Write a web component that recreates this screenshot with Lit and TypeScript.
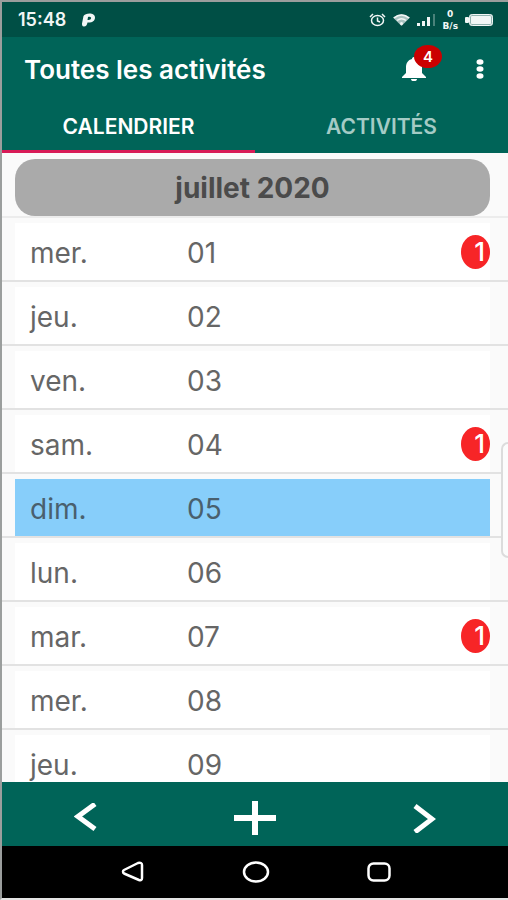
import { LitElement, html, css, svg } from "lit";
import { customElement, state } from "lit/decorators.js";
import { classMap } from "lit/directives/class-map.js";

interface Day {
  name: string;
  num: string;
  count?: number;
  today?: boolean;
}

const DAYS: Day[] = [
  { name: "mer.", num: "01", count: 1 },
  { name: "jeu.", num: "02" },
  { name: "ven.", num: "03" },
  { name: "sam.", num: "04", count: 1 },
  { name: "dim.", num: "05", today: true },
  { name: "lun.", num: "06" },
  { name: "mar.", num: "07", count: 1 },
  { name: "mer.", num: "08" },
  { name: "jeu.", num: "09" },
];

const icon = (w: number, h: number, body: unknown) =>
  html`<svg width=${w} height=${h} viewBox="0 0 ${w} ${h}" aria-hidden="true">${body}</svg>`;

@customElement("status-bar")
class StatusBar extends LitElement {
  static styles = css`
    :host {
      display: flex;
      align-items: center;
      height: 35px;
      padding: 0 14px 0 16px;
      background: #004f45;
      color: #f2f7f6;
    }
    svg {
      display: block;
    }
    .time {
      font-size: 18px;
      font-weight: 600;
      margin-right: 16px;
    }
    .right {
      display: flex;
      align-items: center;
      gap: 7px;
      margin-left: auto;
    }
    .rate {
      font-family: "DejaVu Sans", sans-serif;
      font-size: 9px;
      line-height: 12px;
      font-weight: 700;
      text-align: center;
    }
    .rate span {
      display: block;
    }
  `;

  render() {
    return html`
      <span class="time">15:48</span>
      ${icon(13, 14, svg`<path fill="currentColor" fill-rule="evenodd" d="M1.500 3C3 0 13-1 13 4.500c0 4-4 5.500-7.500 5C5 12 4 13.500 2 13.500S0 12 0 10.500L1.500 3ZM6 4 5.500 7C8 7.500 9.500 6 9 4.500 8.500 3.500 7 3.500 6 4Z"/>`)}
      <div class="right">
        ${icon(17, 14, svg`<g fill="none" stroke="currentColor" stroke-width="1.500"><ellipse cx="8.500" cy="7.500" rx="6" ry="5"/><path d="M8.500 4.500V8L11 9M1 4 4 1M16 4l-3-3"/></g>`)}
        ${icon(17, 12, svg`<path fill="currentColor" opacity=".7" d="M0 3.500Q8.500-3 17 3.500L8.500 12Z"/><path fill="none" stroke="currentColor" stroke-width="1.500" d="M1 4Q8.500-2 16 4M4 6.500Q8.500 3 13 6.500"/><circle cx="8.500" cy="9.500" r="1.500" fill="currentColor"/>`)}
        ${icon(18, 12, svg`<path fill="currentColor" d="M0 9h3v3H0ZM5 7h3v5H5ZM10 3h3v9h-3Z"/><path fill="currentColor" opacity=".3" d="M16 0h2v12h-2Z"/>`)}
        <div class="rate"><span>0</span><span>B/s</span></div>
        ${icon(29, 14, svg`<rect x="4" y="1" width="24" height="12" rx="3" fill="currentColor" opacity=".6"/><rect x="6" y="3" width="20" height="8" rx="1" fill="currentColor"/><rect x="4.500" y="1.500" width="23" height="11" rx="3" fill="none" stroke="currentColor"/><rect y="4" width="4" height="6" rx="1" fill="currentColor"/>`)}
      </div>
    `;
  }
}

@customElement("day-row")
class DayRow extends LitElement {
  static properties = { day: { attribute: false } };
  declare day: Day;

  static styles = css`
    :host {
      display: block;
      padding: 5px 18px 0 13px;
      border-bottom: 2px solid #e2e2e2;
    }
    .row {
      display: flex;
      align-items: center;
      height: 57px;
      padding-left: 15px;
      background: #fff;
      color: #666;
      font-size: 28px;
    }
    .today {
      background: #87cefa;
      color: #49606e;
    }
    .name {
      flex: 0 0 157px;
    }
    .name,
    .num {
      padding-top: 2px;
    }
    .count {
      box-sizing: border-box;
      width: 29px;
      height: 34px;
      line-height: 34px;
      margin-left: auto;
      padding-right: 5px;
      border-radius: 50%;
      background: #f72527;
      color: #fff;
      font-size: 26px;
      font-weight: 500;
      text-align: right;
    }
  `;

  render() {
    const d = this.day;
    return html`<div class=${classMap({ row: true, today: !!d.today })}>
      <span class="name">${d.name}</span>
      <span class="num">${d.num}</span>
      ${d.count ? html`<span class="count">${d.count}</span>` : ""}
    </div>`;
  }
}

@customElement("app-root")
class AppRoot extends LitElement {
  @state() private tab = 0;

  static styles = css`
    :host {
      display: flex;
      flex-direction: column;
      box-sizing: border-box;
      height: 100vh;
      border: 2px solid #9b9e9d;
      border-right: 0;
      border-bottom-color: #e4e4e4;
      background: #fafafa;
      font-family: Inter, Roboto, sans-serif;
      position: relative;
    }
    svg {
      display: block;
    }
    button {
      padding: 0;
      border: 0;
      background: none;
      color: inherit;
      font: inherit;
      cursor: pointer;
    }
    .top {
      display: flex;
      align-items: center;
      height: 64px;
      padding: 0 24px 0 22px;
      background: #006458;
      color: #fff;
    }
    h1 {
      margin: 0;
      flex: 1;
      font-size: 26px;
      font-weight: 600;
    }
    .bell {
      position: relative;
      margin-right: 50px;
    }
    .badge {
      position: absolute;
      left: 12px;
      top: -12px;
      width: 28px;
      height: 23px;
      border-radius: 50%;
      background: #cb0000;
      font-size: 15px;
      line-height: 23px;
      font-weight: 600;
    }
    .tabs {
      display: flex;
      height: 52px;
      background: #006458;
      color: #a4cbc5;
    }
    .tabs button {
      flex: 1;
      padding-top: 2px;
      border-bottom: 3px solid transparent;
      font-size: 21px;
      font-weight: 600;
    }
    .tabs .active {
      color: #fff;
      border-bottom-color: #d81b57;
    }
    .list {
      flex: 1;
      min-height: 0;
      overflow: hidden;
    }
    h2 {
      margin: 0 18px 0 13px;
      height: 57px;
      line-height: 58px;
      border-radius: 20px;
      background: #aaa;
      color: #4b4b4b;
      text-align: center;
      font-size: 28px;
      font-weight: 700;
    }
    .month {
      padding-top: 6px;
      border-bottom: 2px solid #ececec;
    }
    ul {
      margin: 0;
      padding: 0;
      list-style: none;
    }
    .handle {
      position: absolute;
      right: 0;
      top: 440px;
      width: 7px;
      height: 116px;
      box-sizing: border-box;
      border: 2px solid #dcdcdc;
      border-right: 0;
      border-radius: 12px 0 0 12px;
      background: #fcfcfc;
    }
    .actions,
    .system {
      display: grid;
      grid-template-columns: repeat(3, 1fr);
      color: #fff;
    }
    .actions {
      box-sizing: border-box;
      height: 64px;
      padding-top: 8px;
      background: #006458;
    }
    .actions button,
    .system button {
      display: grid;
      place-items: center;
    }
    .system {
      height: 52px;
      padding: 0 68px 0 70px;
      background: #000;
    }
  `;

  render() {
    return html`
      <status-bar></status-bar>
      <header class="top">
        <h1>Toutes les activités</h1>
        <button class="bell" aria-label="Notifications">
          ${icon(24, 24, svg`<path fill="currentColor" d="M12 0c1.500 0 2 1 2 2 4 1 6 4 6 8v6l4 4v1H0v-1l4-4v-6c0-4 2-7 6-8 0-1 .5-2 2-2ZM9 22h6c0 3-6 3-6 0Z"/>`)}
          <span class="badge">4</span>
        </button>
        <button aria-label="Menu">
          ${icon(8, 20, svg`<g fill="currentColor"><ellipse cx="4" cy="3" rx="3.500" ry="2.800"/><ellipse cx="4" cy="10" rx="3.500" ry="2.800"/><ellipse cx="4" cy="17" rx="3.500" ry="2.800"/></g>`)}
        </button>
      </header>
      <nav class="tabs" role="tablist">
        ${["CALENDRIER", "ACTIVITÉS"].map(
          (t, i) => html`<button
            role="tab"
            aria-selected=${this.tab === i}
            class=${classMap({ active: this.tab === i })}
            @click=${() => (this.tab = i)}
          >${t}</button>`
        )}
      </nav>
      <main class="list">
        <div class="month"><h2>juillet 2020</h2></div>
        <ul>
          ${DAYS.map((d) => html`<li><day-row .day=${d}></day-row></li>`)}
        </ul>
      </main>
      <div class="handle"></div>
      <div class="actions">
        <button aria-label="Précédent">
          ${icon(24, 30, svg`<path fill="none" stroke="currentColor" stroke-width="5" d="M21 1 4 13.500 21 26"/>`)}
        </button>
        <button aria-label="Ajouter">
          ${icon(42, 34, svg`<path fill="currentColor" d="M18 0h6v34h-6Z M0 14h42v6H0Z"/>`)}
        </button>
        <button aria-label="Suivant">
          ${icon(24, 30, svg`<path fill="none" stroke="currentColor" stroke-width="5" d="M3 3 20 16 3 29"/>`)}
        </button>
      </div>
      <div class="system">
        <button aria-label="Retour">
          ${icon(24, 22, svg`<path fill="none" stroke="currentColor" stroke-width="2.500" stroke-linejoin="round" d="M2 10.500Q2 9.500 3 9L17 2Q21 1 21 4V17Q21 20 18 19L3 12.500Q2 12 2 10.500Z"/>`)}
        </button>
        <button aria-label="Accueil">
          ${icon(28, 22, svg`<ellipse cx="14" cy="11" rx="12" ry="9.500" fill="none" stroke="currentColor" stroke-width="2.500"/>`)}
        </button>
        <button aria-label="Applications récentes">
          ${icon(24, 20, svg`<rect x="1.500" y="1.500" width="21" height="17" rx="5" fill="none" stroke="currentColor" stroke-width="2.500"/>`)}
        </button>
      </div>
    `;
  }
}
